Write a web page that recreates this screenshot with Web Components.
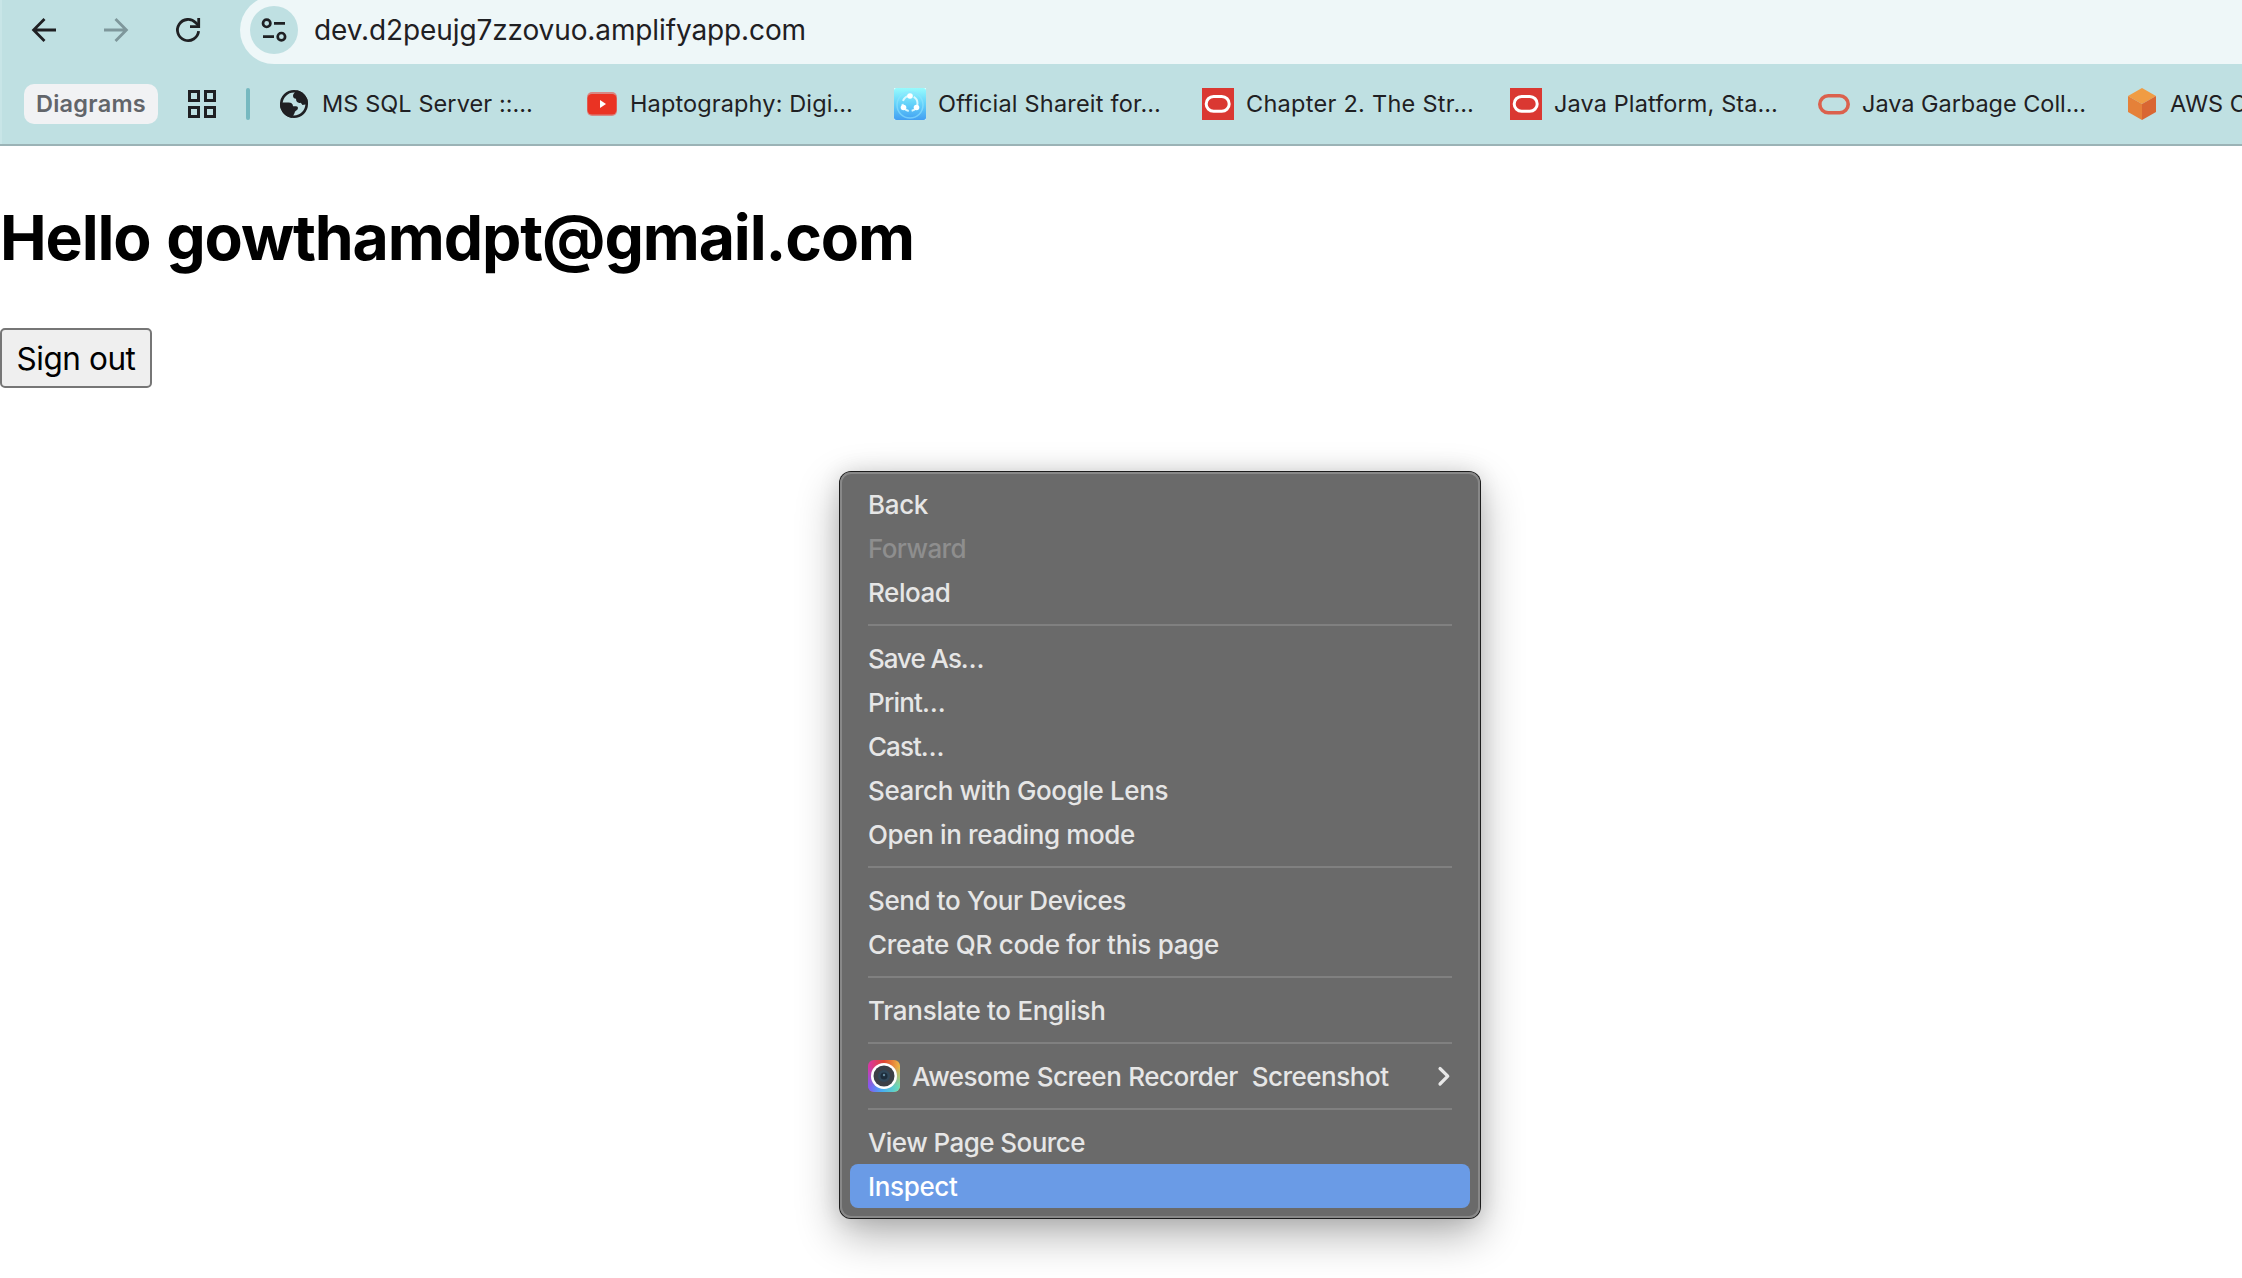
<!DOCTYPE html>
<html lang="en">
<head>
<meta charset="utf-8">
<title>dev.d2peujg7zzovuo.amplifyapp.com</title>
<style>
html,body{margin:0;height:100%;overflow:hidden;background:#fff}
body{font-family:Inter,"Liberation Sans",sans-serif}
</style>
</head>
<body>
<browser-window></browser-window>

<template id="t-window">
<style>
:host{display:flex;flex-direction:column;width:2242px;height:1278px;overflow:hidden;position:relative}
context-menu{position:absolute;left:840px;top:472px}
</style>
<browser-toolbar></browser-toolbar>
<page-content></page-content>
<context-menu></context-menu>
</template>

<template id="t-toolbar">
<style>
:host{display:flex;flex-direction:column;height:144px;background:#bfe0e2;border-bottom:2px solid #9bb3b6;box-shadow:inset 2px 0 #c8e5e7;overflow:hidden;color:#1f2023;flex:none}
.nav{display:flex;align-items:center;height:68px;margin-top:-4px;flex:none}
.nav>svg{flex:none;width:32px;height:32px;margin-left:40px}
.nav>.b{margin-left:28px}
.pill{flex:1;display:flex;align-items:center;height:68px;margin-left:36px;border-radius:34px 0 0 34px;background:#eef7f8}
.site{width:48px;height:48px;border-radius:50%;background:#bfe0e2;margin-left:10px;display:block;flex:none}
.url{font-size:28px;margin-left:16px}
.marks{display:flex;align-items:center;height:80px;white-space:nowrap;flex:none}
.chip{box-sizing:border-box;width:134px;height:40px;padding-bottom:1px;border-radius:10px;background:#f1f2f4;color:#62656a;font-size:23.5px;font-weight:600;display:flex;align-items:center;justify-content:center;margin-left:24px;flex:none}
.grid{width:32px;height:32px;margin-left:28px;flex:none}
.bar{width:4px;height:32px;border-radius:2px;background:#77b9c0;margin:0 28px;flex:none}
</style>
<div class="nav">
<svg class="b" viewBox="0 0 32 32" fill="none" stroke="#1f2023" stroke-width="2.8"><path d="M28 16H6M16.5 5 5.6 16l10.900 11"/></svg>
<svg viewBox="0 0 32 32" fill="none" stroke="#7e979b" stroke-width="2.8"><path d="M4 16h22M15.500 5l10.900 11-10.900 11"/></svg>
<svg viewBox="0 0 32 32" fill="none" stroke="#1f2023" stroke-width="2.8"><path d="M26.600 17.200A10.600 10.600 0 1 1 23.800 8.800L26.500 11.600"/><path d="M26.700 4v8.700H18"/></svg>
<div class="pill">
<svg class="site" viewBox="0 0 48 48" fill="none" stroke="#1f2023" stroke-width="2.700"><circle cx="16.700" cy="17.300" r="3.700"/><path d="M24 17.300h11M13 30.700h11"/><circle cx="31.400" cy="30.700" r="3.700"/></svg>
<fit-text class="url" w="492">dev.d2peujg7zzovuo.amplifyapp.com</fit-text>
</div>
</div>
<div class="marks">
<div class="chip"><fit-text w="110">Diagrams</fit-text></div>
<svg class="grid" viewBox="0 0 32 32" fill="none" stroke="#1f2023" stroke-width="3"><path d="M3.500 3.500h9v9h-9zM19.500 3.500h9v9h-9zM3.500 19.500h9v9h-9zM19.500 19.500h9v9h-9z"/></svg>
<div class="bar"></div>
<bookmark-item w="211"><svg slot="icon" viewBox="0 0 32 32"><defs><clipPath id="g"><circle cx="16" cy="16" r="14"/></clipPath></defs><circle cx="16" cy="16" r="12.700" fill="#bfe0e2" stroke="#1f2023" stroke-width="2.600"/><g fill="#1f2023" clip-path="url(#g)"><path d="M19 2c-2 2.500-4 3.500-4 5.800 0 2 1.300 2.700 3 3 0 3 1.800 4.700 4.800 3.900l1.700 2.300 6-1V2z"/><path d="M2 14.500h8.500c3 0 4.500 1.300 4.500 3.800h2.800c2.200 0 2.700 1.700 1.700 3.200-1 1.400-2.900 1.500-2.900 3.500L14 30H2z"/></g></svg>MS SQL Server ::…</bookmark-item>
<bookmark-item w="223"><svg slot="icon" viewBox="0 0 32 32"><rect x="1" y="4" width="30" height="24" rx="5" fill="#d98783"/><rect x="1.500" y="6" width="29" height="20.500" rx="4.500" fill="#ea3323"/><path d="M14 12l6 4-6 4z" fill="#fff"/></svg>Haptography: Digi…</bookmark-item>
<bookmark-item w="223"><svg slot="icon" viewBox="0 0 32 32"><defs><linearGradient id="s" x2="0" y2="1"><stop stop-color="#98fbfd"/><stop offset=".5" stop-color="#64d2fa"/><stop offset="1" stop-color="#429ff2"/></linearGradient></defs><rect width="32" height="32" fill="#e8ffff"/><rect width="32" height="32" rx="2.500" fill="url(#s)"/><circle cx="16" cy="17" r="13" fill="none" stroke="#8fe5ff" stroke-width="1.500" opacity=".6"/><circle cx="16" cy="15.500" r="7.500" fill="none" stroke="#d8f8ff" stroke-width="2" stroke-dasharray="10 3"/><circle cx="16" cy="8" r="2.800" fill="#fff"/><circle cx="9.500" cy="19.500" r="2.800" fill="#fff"/><circle cx="22.500" cy="19.500" r="2.800" fill="#fff"/></svg>Official Shareit for…</bookmark-item>
<bookmark-item w="228"><svg slot="icon" viewBox="0 0 32 32"><path fill="#da3832" d="M0 0h32v32H0z"/><rect x="4.200" y="8.500" width="23" height="14.800" rx="7.400" fill="none" stroke="#fff" stroke-width="3"/></svg>Chapter 2. The Str…</bookmark-item>
<bookmark-item w="224"><svg slot="icon" viewBox="0 0 32 32"><path fill="#da3832" d="M0 0h32v32H0z"/><rect x="4.200" y="8.500" width="23" height="14.800" rx="7.400" fill="none" stroke="#fff" stroke-width="3"/></svg>Java Platform, Sta…</bookmark-item>
<bookmark-item w="224"><svg slot="icon" viewBox="0 0 32 32"><rect x="1.800" y="7.800" width="28.400" height="17" rx="8.500" fill="none" stroke="#db614d" stroke-width="3.600"/></svg>Java Garbage Coll…</bookmark-item>
<bookmark-item><svg slot="icon" viewBox="0 0 32 32"><path fill="#f09c43" d="M16 0l14 8-14 8L2 8z"/><path fill="#e58139" d="M2 8l14 8v16L2 24z"/><path fill="#d96632" d="M30 8l-14 8v16l14-8z"/></svg>AWS C</bookmark-item>
</div>
</template>

<template id="t-bookmark">
<style>
:host{display:flex;align-items:center;width:308px;flex:none;font-size:23.500px}
::slotted(svg){width:32px;height:32px;margin-right:12px;flex:none;display:block}
fit-text{padding-bottom:2px}
</style>
<slot name="icon"></slot><fit-text><slot></slot></fit-text>
</template>

<template id="t-page">
<style>
:host{display:flex;flex-direction:column;align-items:flex-start;flex:1;background:#fff;color:#000}
h1{margin:51px 0 0;font-size:62.500px;line-height:80px;font-weight:700;word-spacing:2px}
button{box-sizing:border-box;width:152px;height:60px;margin:51px 0 0;padding:1px 0 0;border:2px solid #767676;border-radius:5px;background:#efefef;color:#000;font:400 31.500px/56px Inter,"Liberation Sans",sans-serif;display:flex;align-items:center;justify-content:center}
</style>
<h1><fit-text w="914">Hello gowthamdpt@gmail.com</fit-text></h1>
<button><fit-text w="119">Sign out</fit-text></button>
</template>

<template id="t-menu">
<style>
:host{display:flex;flex-direction:column;box-sizing:border-box;width:640px;height:746px;padding:10px;border-radius:11px;background:#6a6a6a;box-shadow:inset 0 0 0 2px #888,0 0 0 1px #1c1c1c,0 16px 44px rgba(0,0,0,.32),0 0 22px rgba(0,0,0,.12)}
hr{flex:none;width:584px;height:2px;margin:10px 18px;border:0;background:#808080}
.ext{width:32px;height:32px;margin-right:12px;flex:none}
.arrow{width:14px;height:24px;margin-left:auto;margin-right:19px;flex:none}
</style>
<menu-row w="60">Back</menu-row>
<menu-row w="98" disabled>Forward</menu-row>
<menu-row w="82.500">Reload</menu-row>
<hr>
<menu-row w="115.500">Save As…</menu-row>
<menu-row w="77">Print…</menu-row>
<menu-row w="75.500">Cast…</menu-row>
<menu-row w="300">Search with Google Lens</menu-row>
<menu-row w="267">Open in reading mode</menu-row>
<hr>
<menu-row w="258">Send to Your Devices</menu-row>
<menu-row w="351">Create QR code for this page</menu-row>
<hr>
<menu-row w="237.500">Translate to English</menu-row>
<hr>
<menu-row w="476.500" spaced><svg class="ext" slot="icon" viewBox="0 0 32 32"><defs><linearGradient id="a" x2="1" y2="0"><stop stop-color="#d936a8"/><stop offset=".5" stop-color="#e0452f"/><stop offset="1" stop-color="#edb944"/></linearGradient><linearGradient id="b" x2="1" y2="0"><stop stop-color="#8058f4"/><stop offset=".45" stop-color="#47aef2"/><stop offset="1" stop-color="#6be0b4"/></linearGradient><linearGradient id="m" x2="0" y2="1"><stop offset=".2" stop-color="#000"/><stop offset=".85" stop-color="#fff"/></linearGradient><mask id="k"><path fill="url(#m)" d="M0 0h32v32H0z"/></mask></defs><rect width="32" height="32" rx="6" fill="url(#a)"/><rect width="32" height="32" rx="6" fill="url(#b)" mask="url(#k)"/><circle cx="16" cy="16" r="13" fill="#fff"/><circle cx="16" cy="16" r="10.500" fill="#3c4047"/><circle cx="16" cy="16" r="6" fill="#31485a"/><circle cx="16" cy="16" r="3.500" fill="#1d2d3b"/><circle cx="16" cy="15" r="1.200" fill="#668ba0"/></svg>Awesome Screen Recorder  Screenshot<svg class="arrow" slot="end" viewBox="0 0 14 24" fill="none" stroke="#e8e8e8" stroke-width="3.200" stroke-linecap="round" stroke-linejoin="round"><path d="M3 4.500l7.800 7.700L3 20"/></svg></menu-row>
<hr>
<menu-row w="217">View Page Source</menu-row>
<menu-row w="89.500" selected>Inspect</menu-row>
</template>

<template id="t-row">
<style>
:host{display:flex;align-items:center;box-sizing:border-box;height:44px;flex:none;padding-left:18px;border-radius:8px;color:#e6e6e6;font-size:26px;font-weight:500;white-space:pre}
:host([spaced]){word-spacing:.5px}
:host([disabled]){color:#8e8e8e}
:host([selected]){background:#6a9be6;color:#fff}
</style>
<slot name="icon"></slot><fit-text><slot></slot></fit-text><slot name="end"></slot>
</template>

<script>
class Templated extends HTMLElement{
  constructor(){
    super();
    this.attachShadow({mode:"open"}).append(document.getElementById(this.constructor.tpl).content.cloneNode(true));
  }
}
/* Tracks its text so that the line takes the advance width given in w. */
class FitText extends HTMLElement{
  static observedAttributes=["w"];
  constructor(){
    super();
    this.attachShadow({mode:"open"}).innerHTML="<style>:host{display:block;white-space:pre;flex:none}span{display:inline-block}</style><span><slot></slot></span>";
  }
  connectedCallback(){this.fit();requestAnimationFrame(()=>this.fit())}
  attributeChangedCallback(){this.fit()}
  fit(){
    const w=+this.getAttribute("w");
    if(!w||!this.isConnected)return;
    const s=this.shadowRoot.querySelector("span");
    s.style.letterSpacing="0";
    let text=this.textContent;
    const slot=this.querySelector("slot");
    if(slot)text=slot.assignedNodes().map(n=>n.textContent).join("");
    const n=[...text].length;
    if(n)s.style.letterSpacing=(w-s.getBoundingClientRect().width)/n+"px";
  }
}
class WithLabel extends Templated{
  connectedCallback(){
    const w=this.getAttribute("w");
    if(w)this.shadowRoot.querySelector("fit-text").setAttribute("w",w);
  }
}
customElements.define("fit-text",FitText);
customElements.define("bookmark-item",class extends WithLabel{static tpl="t-bookmark"});
customElements.define("menu-row",class extends WithLabel{static tpl="t-row"});
customElements.define("context-menu",class extends Templated{static tpl="t-menu"});
customElements.define("page-content",class extends Templated{static tpl="t-page"});
customElements.define("browser-toolbar",class extends Templated{static tpl="t-toolbar"});
customElements.define("browser-window",class extends Templated{static tpl="t-window"});
</script>
</body>
</html>
